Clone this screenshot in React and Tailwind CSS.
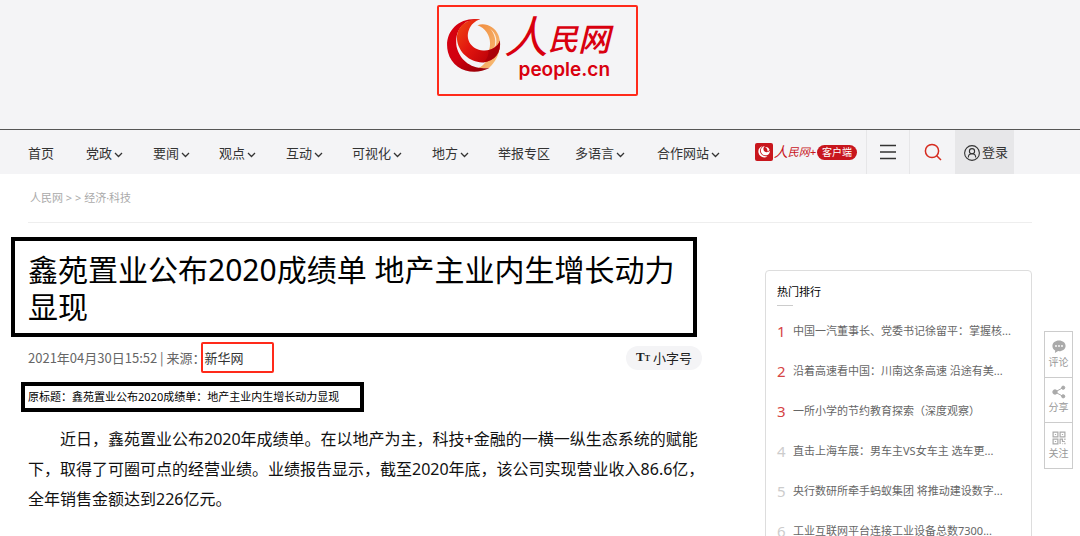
import React from "react";

const NAV = [
  ["首页", false],
  ["党政", true],
  ["要闻", true],
  ["观点", true],
  ["互动", true],
  ["可视化", true],
  ["地方", true],
  ["举报专区", false],
  ["多语言", true],
  ["合作网站", true],
];

const RANKING = [
  "中国一汽董事长、党委书记徐留平：掌握核...",
  "沿着高速看中国：川南这条高速 沿途有美...",
  "一所小学的节约教育探索（深度观察）",
  "直击上海车展：男车主VS女车主 选车更...",
  "央行数研所牵手蚂蚁集团 将推动建设数字...",
  "工业互联网平台连接工业设备总数7300...",
];

function Emblem() {
  return (
    <svg viewBox="50 55 166 166" className="mt-px h-[55px] w-[55px]" aria-hidden="true">
      <defs>
        <linearGradient id="outer" x1="0" y1="0" x2="0.7" y2="1">
          <stop offset="0" stopColor="#d8000f" />
          <stop offset="0.6" stopColor="#d20010" />
          <stop offset="1" stopColor="#9c0008" />
        </linearGradient>
        <linearGradient id="inner" x1="0" y1="0" x2="1" y2="0.7">
          <stop offset="0" stopColor="#ee4a12" />
          <stop offset="0.5" stopColor="#e2150f" />
          <stop offset="1" stopColor="#b80008" />
        </linearGradient>
        <linearGradient id="gold" x1="0" y1="0" x2="1" y2="1">
          <stop offset="0" stopColor="#f08a3c" />
          <stop offset="1" stopColor="#f8c27c" />
        </linearGradient>
      </defs>
      <path d="M145 77C168 67 198 82 208 106C218 132 213 162 198 184C190 197 182 204 178 206L140 208C162 203 178 184 180 152C190 118 174 87 145 77Z" fill="url(#gold)" />
      <path d="M182 86C199 104 203 128 194 150C209 130 203 102 182 86Z" fill="#fdeedd" />
      <path d="M153 59C82 50 42 104 56 158C70 212 132 233 182 205C130 214 92 184 82 142C77 110 86 84 112 66Z" fill="url(#outer)" />
      <path d="M153 59C108 56 82 84 83 118C86 160 125 191 162 189C199 185 216 160 213 123C206 143 184 155 162 153C126 150 108 119 119 91C125 75 138 64 153 59Z" fill="url(#inner)" />
      <path d="M213 123C207 140 192 150 178 152C180 168 172 182 162 189C199 185 216 160 213 123Z" fill="#a30008" opacity="0.7" />
    </svg>
  );
}

function SiteLogo() {
  return (
    <a
      href="#home"
      aria-label="人民网 people.cn"
      className="flex h-[91px] w-[201px] items-start rounded-xs border-2 border-[#ff2a1a] pt-[10px] pl-[7px] text-[#d9000f]"
    >
      <Emblem />
      <span className="flex flex-col items-end pl-[3px]">
        <span className="flex h-[41px] items-end leading-none italic">
          <span className="text-[44px] leading-[44px]">人</span>
          <span className="text-[30px] leading-[39px] font-medium">民</span>
          <span className="text-[32px] leading-[39px] font-medium">网</span>
        </span>
        <span className="font-['Inter',sans-serif] text-[19px] leading-6 font-semibold">people.cn</span>
      </span>
    </a>
  );
}

function Chevron() {
  return (
    <svg viewBox="0 0 9 6" className="mt-[3px] h-[6px] w-[9px]" fill="none" stroke="#333" strokeWidth="1.3" aria-hidden="true">
      <path d="M1 1l3.5 3.5L8 1" />
    </svg>
  );
}

function AppBadge() {
  return (
    <a href="#app" className="flex w-[111px] items-center">
      <svg viewBox="0 0 18 18" className="h-[18px] w-[18px]" aria-hidden="true">
        <rect width="18" height="18" rx="2" fill="#c8161d" />
        <path d="M8 3.200C4.500 3.500 2.800 6.500 3.500 9.700C4.400 13.800 9 15.700 12.500 13.400C9 13.600 5.600 11.500 5 8.700C4.600 6.500 5.800 4.300 8 3.200Z" fill="#fff" />
        <path d="M9.800 3C6.600 3.800 5.200 6.400 6 8.900C7 12 10.500 13.200 13 11.700C14.500 10.700 15 9.200 14.900 7.600C13.500 9.600 10.900 9.900 9.300 8.200C7.900 6.700 8.200 4.500 9.800 3Z" fill="#fff" />
        <path d="M10 4C12.200 3.600 14 4.900 14.500 6.800C14 7.700 13.300 8.200 12.500 8.400C12.700 6.500 11.800 4.900 10 4Z" fill="#fff" />
      </svg>
      <span className="flex w-[44px] items-center justify-center text-[11px] leading-4 whitespace-nowrap text-[#c8161d] italic">
        <span className="text-[14px]">人</span>民网+
      </span>
      <span className="rounded-full bg-[#c8161d] px-[5px] text-[10px] leading-[15px] text-white">客户端</span>
    </a>
  );
}

function Header() {
  return (
    <header className="bg-[#f4f4f6]">
      <div className="flex h-[129px] justify-center pt-[5px] pr-[5px]">
        <SiteLogo />
      </div>
      <div className="flex h-[45px] items-stretch border-t border-[#555] pl-7">
        <nav className="flex">
          <ul className="grid grid-cols-[58px_67px_66px_67px_66px_80px_66px_77px_82px_98px] items-center">
            {NAV.map(([label, more]) => (
              <li key={label}>
                <a href="#nav" className="flex items-center gap-[2px] pt-[2px] text-[13px] leading-5 whitespace-nowrap text-[#333]">
                  {label}
                  {more && <Chevron />}
                </a>
              </li>
            ))}
          </ul>
        </nav>
        <AppBadge />
        <button type="button" aria-label="菜单" className="flex w-[43px] items-center justify-center border-l border-[#e6e6e8]">
          <svg viewBox="0 0 16 16" className="h-4 w-4" stroke="#333" strokeWidth="1.500" aria-hidden="true">
            <path d="M0 1.500h16M0 8h16M0 14.500h16" />
          </svg>
        </button>
        <button type="button" aria-label="搜索" className="flex w-[46px] items-center justify-center border-l border-[#e6e6e8]">
          <svg viewBox="0 0 18 18" className="h-[18px] w-[18px]" fill="none" stroke="#d62b1f" strokeWidth="1.500" aria-hidden="true">
            <circle cx="8" cy="8" r="6.600" />
            <path d="M12.700 12.700L17 17" />
          </svg>
        </button>
        <button type="button" className="flex w-[59px] items-center gap-[2px] bg-[#e7e7e9] pt-[2px] pl-[9px] text-[13px] text-[#333]">
          <svg viewBox="0 0 16 16" className="h-4 w-4" fill="none" stroke="#333" strokeWidth="1.100" aria-hidden="true">
            <circle cx="8" cy="8" r="7.400" />
            <circle cx="8" cy="6.200" r="2.600" />
            <path d="M4.300 12.500C4.300 10 5.500 8.800 8 8.800s3.700 1.200 3.700 3.700" />
          </svg>
          登录
        </button>
      </div>
    </header>
  );
}

function Article() {
  return (
    <article className="w-[678px] shrink-0 text-black">
      <h1 className="-ml-[17px] w-[686px] border-4 border-black px-[13px] pt-[10px] pb-2 text-[30px] leading-[37px]">
        鑫苑置业公布2020成绩单 地产主业内生增长动力显现
      </h1>
      <div className="flex items-center justify-between pt-[5px] pr-1 font-['Noto_Sans_CJK_SC',sans-serif] text-[13px] text-[#666]">
        <div className="flex items-center">
          2021年04月30日15:52 | 来源：
          <a href="#source" className="-ml-[5px] w-[73px] rounded-xs border-2 border-[#ff2a1a] px-[2px] py-1 leading-[19px] text-[#333]">
            新华网
          </a>
        </div>
        <button type="button" className="flex h-6 w-[76px] items-center justify-center gap-[3px] rounded-full bg-[#f4f4f6] text-[#222]">
          <span className="flex items-baseline font-['Liberation_Serif',serif] leading-4 font-bold">
            T<span className="text-[8px]">T</span>
          </span>
          小字号
        </button>
      </div>
      <p className="mt-[9px] -ml-[7px] w-[343px] border-4 border-black px-[3px] text-[11px] leading-[22px]">
        原标题：鑫苑置业公布2020成绩单：地产主业内生增长动力显现
      </p>
      <p className="mt-[12px] indent-[2em] text-[16px] leading-[30px] text-[#111]">
        近日，鑫苑置业公布2020年成绩单。在以地产为主，科技+金融的一横一纵生态系统的赋能下，取得了可圈可点的经营业绩。业绩报告显示，截至2020年底，该公司实现营业收入86.6亿，全年销售金额达到226亿元。
      </p>
    </article>
  );
}

function Ranking() {
  return (
    <aside className="mt-[33px] w-[267px] shrink-0 rounded-sm border border-[#ddd] px-[11px] pt-[13px]">
      <h2 className="text-[11px] leading-4 text-black">热门排行</h2>
      <div className="mt-[5px] h-px w-4 bg-[#ccc]" />
      <ol className="mt-[5px]">
        {RANKING.map((title, i) => (
          <li key={title} className="flex h-10 items-center">
            <span className={i < 3 ? "w-4 text-[15px] text-[#d64545]" : "w-4 text-[15px] text-[#ccc]"}>{i + 1}</span>
            <a href="#story" className="text-[11px] whitespace-nowrap text-[#666]">{title}</a>
          </li>
        ))}
      </ol>
    </aside>
  );
}

function ShareBar() {
  return (
    <div className="absolute top-[331px] right-[7px] w-[29px] divide-y divide-[#ccc] border border-[#ccc] bg-white text-[10px] leading-4 text-[#999]">
      <button type="button" className="flex h-[46px] w-full flex-col items-center justify-center">
        <svg viewBox="0 0 14 14" className="h-[14px] w-[14px]" aria-hidden="true">
          <path d="M7 .5C3.200 .5 .4 2.900 .4 5.900c0 2 1.100 3.600 2.800 4.500L2.900 13l3.200-1.900C10.300 11.500 13.600 9.100 13.600 5.900 13.600 2.900 10.800 .5 7 .5Z" fill="#aaa" />
          <g fill="#fff">
            <circle cx="4" cy="6" r=".9" />
            <circle cx="7" cy="6" r=".9" />
            <circle cx="10" cy="6" r=".9" />
          </g>
        </svg>
        评论
      </button>
      <button type="button" className="flex h-[45px] w-full flex-col items-center justify-center">
        <svg viewBox="0 0 14 14" className="h-[14px] w-[14px]" fill="#aaa" stroke="#aaa" aria-hidden="true">
          <path d="M3 7l8-4.300M3 7l8 4.300" />
          <circle cx="3" cy="7" r="2.200" />
          <circle cx="11.200" cy="2.700" r="1.600" />
          <circle cx="11.200" cy="11.300" r="1.600" />
        </svg>
        分享
      </button>
      <button type="button" className="flex h-[45px] w-full flex-col items-center justify-center">
        <svg viewBox="0 0 14 14" className="h-[14px] w-[14px]" fill="none" stroke="#aaa" strokeWidth="1.200" aria-hidden="true">
          <path d="M1.100 1.100h4.800v4.800H1.100zM8.100 1.100h4.800v4.800H8.100zM1.100 8.100h4.800v4.800H1.100z" />
          <path d="M2.900 3.500h1.200M9.900 3.500h1.200M2.900 10.500h1.200M8.100 7.500v5.500M8.100 8.200h2.400v2.300h2.400M12.900 7.500v1.500M10.500 12.600h.6M12.900 11.800v1.400" />
        </svg>
        关注
      </button>
    </div>
  );
}

export default function App() {
  return (
    <div className="relative bg-white font-['Noto_Sans','Noto_Sans_CJK_SC',sans-serif]">
      <Header />
      <main className="pr-12 pl-7">
        <div className="flex h-[49px] items-center border-b border-[#eee] pl-[2px] text-[11px] text-[#aaa]">
          人民网 &gt; &gt; 经济·科技
        </div>
        <div className="flex items-start justify-between pt-[14px]">
          <Article />
          <Ranking />
        </div>
      </main>
      <ShareBar />
    </div>
  );
}
